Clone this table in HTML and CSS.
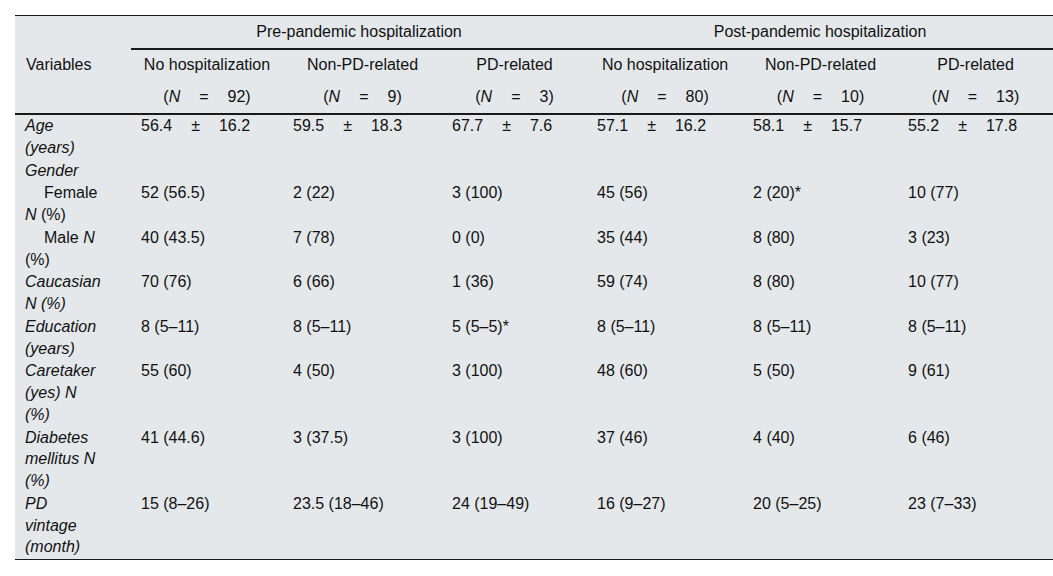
FILE: index.html
```html
<!DOCTYPE html>
<html lang="en">
<head>
<meta charset="utf-8">
<title>Baseline characteristics by hospitalization</title>
<link rel="stylesheet" href="styles.css">
</head>
<body>
<div class="page">
<table class="tbl">
<colgroup>
<col class="c-var"><col class="c-1"><col class="c-2"><col class="c-3"><col class="c-4"><col class="c-5"><col class="c-6">
</colgroup>
<thead>
<tr class="h-grp">
<th rowspan="3" class="h-var">Variables</th>
<th colspan="3" class="grp">Pre-pandemic hospitalization</th>
<th colspan="3" class="grp">Post-pandemic hospitalization</th>
</tr>
<tr class="h-sub">
<th>No hospitalization</th><th>Non-PD-related</th><th>PD-related</th>
<th>No hospitalization</th><th>Non-PD-related</th><th>PD-related</th>
</tr>
<tr class="h-n">
<th>(<i>N</i><span class="eq">=</span>92)</th>
<th>(<i>N</i><span class="eq">=</span>9)</th>
<th>(<i>N</i><span class="eq">=</span>3)</th>
<th>(<i>N</i><span class="eq">=</span>80)</th>
<th>(<i>N</i><span class="eq">=</span>10)</th>
<th>(<i>N</i><span class="eq">=</span>13)</th>
</tr>
</thead>
<tbody>
<tr>
<td class="var"><i>Age (years)</i></td>
<td>56.4<span class="pm">±</span>16.2</td>
<td>59.5<span class="pm">±</span>18.3</td>
<td>67.7<span class="pm">±</span>7.6</td>
<td>57.1<span class="pm">±</span>16.2</td>
<td>58.1<span class="pm">±</span>15.7</td>
<td>55.2<span class="pm">±</span>17.8</td>
</tr>
<tr>
<td class="var"><i>Gender</i></td>
<td></td><td></td><td></td><td></td><td></td><td></td>
</tr>
<tr>
<td class="var sub">Female <i>N</i> (%)</td>
<td>52 (56.5)</td><td>2 (22)</td><td>3 (100)</td><td>45 (56)</td><td>2 (20)*</td><td>10 (77)</td>
</tr>
<tr>
<td class="var sub">Male <i>N</i> (%)</td>
<td>40 (43.5)</td><td>7 (78)</td><td>0 (0)</td><td>35 (44)</td><td>8 (80)</td><td>3 (23)</td>
</tr>
<tr>
<td class="var"><i>Caucasian N (%)</i></td>
<td>70 (76)</td><td>6 (66)</td><td>1 (36)</td><td>59 (74)</td><td>8 (80)</td><td>10 (77)</td>
</tr>
<tr>
<td class="var"><i>Education (years)</i></td>
<td>8 (5–11)</td><td>8 (5–11)</td><td>5 (5–5)*</td><td>8 (5–11)</td><td>8 (5–11)</td><td>8 (5–11)</td>
</tr>
<tr>
<td class="var"><i>Caretaker (yes) N (%)</i></td>
<td>55 (60)</td><td>4 (50)</td><td>3 (100)</td><td>48 (60)</td><td>5 (50)</td><td>9 (61)</td>
</tr>
<tr>
<td class="var"><i>Diabetes mellitus N (%)</i></td>
<td>41 (44.6)</td><td>3 (37.5)</td><td>3 (100)</td><td>37 (46)</td><td>4 (40)</td><td>6 (46)</td>
</tr>
<tr>
<td class="var"><i>PD vintage (month)</i></td>
<td>15 (8–26)</td><td>23.5 (18–46)</td><td>24 (19–49)</td><td>16 (9–27)</td><td>20 (5–25)</td><td>23 (7–33)</td>
</tr>
</tbody>
</table>
</div>
</body>
</html>
```
FILE: styles.css
```css
html, body {
  margin: 0;
  padding: 0;
  background: #ffffff;
}

.page {
  padding: 15px 0 0 15px;
}

.tbl {
  width: 1038px;
  table-layout: fixed;
  border-collapse: collapse;
  background: #e4e8eb;
  color: #111111;
  font-family: "Liberation Sans", Arial, sans-serif;
  font-size: 16px;
  line-height: 21.7px;
  border-top: 1px solid #1a1a1a;
  border-bottom: 1px solid #1a1a1a;
}

.c-var { width: 116px; }
.c-1 { width: 152px; }
.c-2 { width: 159px; }
.c-3 { width: 145px; }
.c-4 { width: 156px; }
.c-5 { width: 155px; }
.c-6 { width: 155px; }

.tbl th {
  font-weight: normal;
  text-align: center;
  vertical-align: middle;
  padding: 4px 10px 5px;
}

.h-grp th.grp {
  padding-top: 5px;
  border-bottom: 2px solid #1a1a1a;
}

.tbl th.h-var {
  text-align: left;
  padding-left: 11px;
  padding-top: 6px;
  border-bottom: 2px solid #1a1a1a;
}

.h-n th {
  padding-top: 6px;
  border-bottom: 2px solid #1a1a1a;
}

.eq {
  margin: 0 19px;
}

.pm {
  margin: 0 19px;
}

.tbl td {
  vertical-align: top;
  text-align: left;
  padding: 0 10px 1.1px;
}

.tbl td.var {
  padding-right: 29px;
}

.tbl td.sub {
  text-indent: 19px;
}
```
